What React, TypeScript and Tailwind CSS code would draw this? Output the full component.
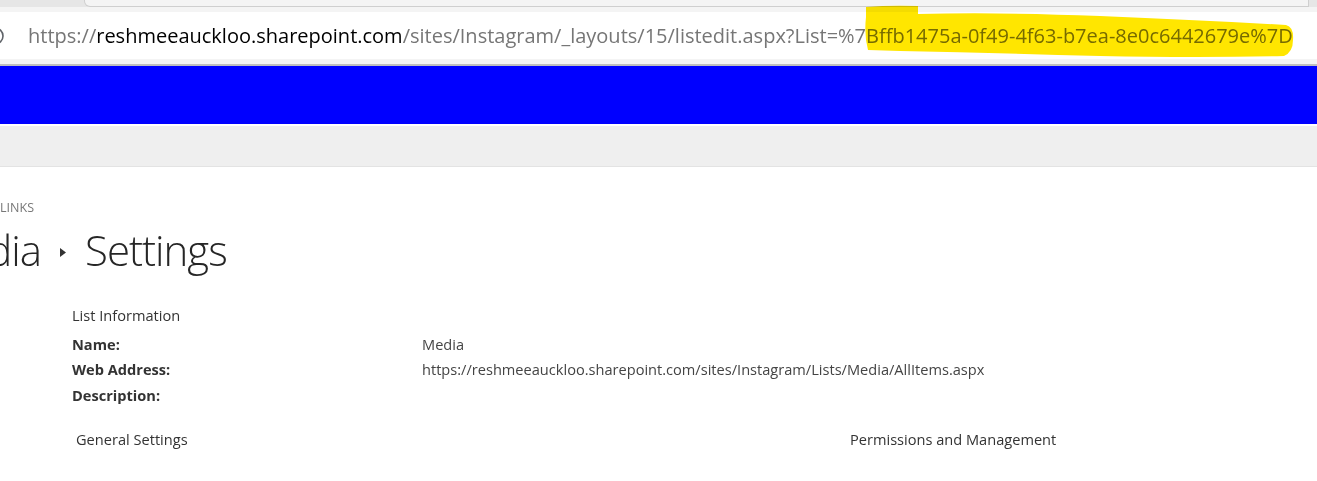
import React from 'react';

const ui = { fontFamily: '"Open Sans", "Noto Sans", Arial, sans-serif' };

// Browser address bar with the highlighted list id
const AddressBar: React.FC = () => (
  <div className="relative">
    <div className="h-[7px] bg-[#e6e6e6] flex">
      <div className="ml-[84px] w-[1225px] h-[7px] bg-[#f4f4f4] border-l border-r border-b border-[#cfcfcf] rounded-bl-[6px]" />
    </div>
    <div className="h-[5px] bg-[#f4f4f4]" />
    <div className="h-[47px] bg-white flex items-center">
      <div className="w-[6px] h-[20px] overflow-hidden">
        <svg width="6" height="20" viewBox="0 0 6 20">
          <circle cx="-5" cy="10" r="8" fill="none" stroke="#5f6368" strokeWidth="1.6" />
        </svg>
      </div>
      <div className="ml-[22px] text-[20px] whitespace-nowrap text-[#767676]" style={ui}>
        https://<span className="text-black">reshmeeauckloo.sharepoint.com</span>/sites/Instagram/_layouts/15/listedit.aspx?List=%7Bffb1475a-0f49-4f63-b7ea-8e0c6442679e%7D
      </div>
    </div>
    <div className="h-[5px] bg-[#f4f4f4]" />
    <div className="h-[2px] bg-[#bfbfbf]" />
    <svg
      className="absolute left-0 top-0 mix-blend-multiply pointer-events-none"
      width="1317"
      height="66"
      viewBox="0 0 1317 66"
    >
      <path
        d="M866 17 L866 7 Q890 5 918 6 L918 14 Q1000 12 1100 16 Q1200 20 1286 25 Q1294 27 1293 40 Q1293 52 1284 56 Q1200 58 1100 56 Q1000 53 900 51 L868 50 Q864 35 866 17 Z"
        fill="#ffe600"
      />
    </svg>
  </div>
);

const InfoRow: React.FC<{ label: string; value?: string }> = ({ label, value }) => (
  <div className="flex h-[25.5px] items-center">
    <div className="w-[350px] font-bold text-[#333]">{label}</div>
    <div className="text-[#444]">{value}</div>
  </div>
);

export default function App() {
  return (
    <div className="w-[1317px] h-[481px] overflow-hidden bg-white" style={ui}>
      <AddressBar />
      <div className="h-[58px] bg-[#0000ff]" />
      <div className="h-[2px] bg-white" />
      <div className="h-[41px] bg-[#efefef] border-b border-[#e3e3e3]" />

      <div className="pt-[34px]">
        <div className="w-[34px] overflow-hidden flex justify-end">
          <span className="whitespace-nowrap text-[12.5px] leading-[14px] text-[#777]">EDIT LINKS</span>
        </div>

        <div className="flex items-center h-[56px] mt-[6px] text-[42px] font-light text-[#262626] tracking-[-1px]">
          <div className="w-[41px] overflow-hidden flex justify-end">
            <span className="whitespace-nowrap">Media</span>
          </div>
          <svg className="ml-[19px] mt-[6px]" width="6" height="9" viewBox="0 0 6 9">
            <path d="M0 0 L6 4.5 L0 9 Z" fill="#333" />
          </svg>
          <span className="ml-[19px] whitespace-nowrap">Settings</span>
        </div>

        <div className="ml-[72px] mt-[26px] text-[14.6px]">
          <div className="h-[26px] flex items-center text-[#333]">List Information</div>
          <div className="mt-[3px]">
            <InfoRow label="Name:" value="Media" />
            <InfoRow label="Web Address:" value="https://reshmeeauckloo.sharepoint.com/sites/Instagram/Lists/Media/AllItems.aspx" />
            <InfoRow label="Description:" />
          </div>
          <div className="mt-[18px] flex h-[26px] items-center text-[#333]">
            <div className="w-[778px] pl-[4px]">General Settings</div>
            <div>Permissions and Management</div>
          </div>
        </div>
      </div>
    </div>
  );
}
